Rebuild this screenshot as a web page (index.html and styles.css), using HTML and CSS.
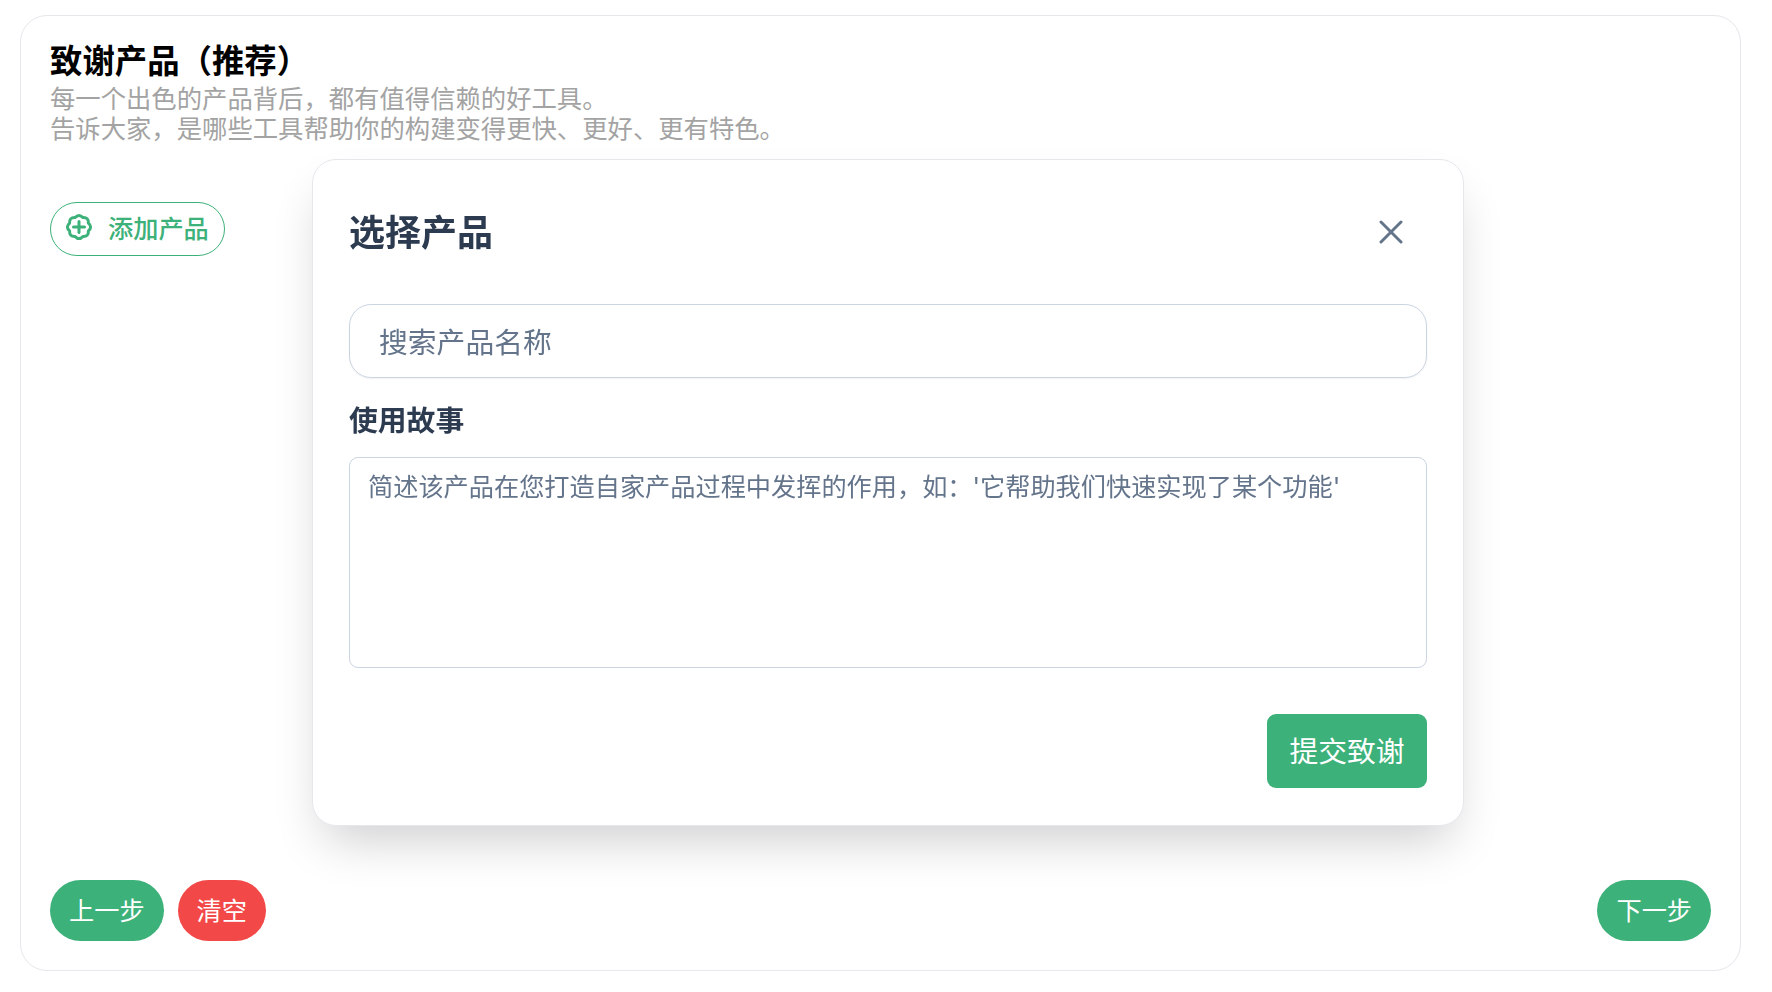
FILE: index.html
```html
<!DOCTYPE html>
<html lang="zh-CN">
<head>
  <meta charset="UTF-8" />
  <meta name="viewport" content="width=device-width, initial-scale=1.0" />
  <title>致谢产品</title>
  <link rel="stylesheet" href="styles.css">
</head>
<body>
  <main class="panel">
    <header class="panel-head">
      <h1>致谢产品（推荐）</h1>
      <p>每一个出色的产品背后，都有值得信赖的好工具。</p>
      <p>告诉大家，是哪些工具帮助你的构建变得更快、更好、更有特色。</p>
    </header>

    <div class="panel-body">
      <button class="add-btn" type="button">
        <svg class="add-icon" viewBox="0 0 26 26" fill="none" stroke="currentColor" stroke-width="3" stroke-linecap="round" stroke-linejoin="round">
          <path d="M22.42 9.1Q26.8 13 22.42 16.9Q22.76 22.76 16.9 22.42Q13 26.8 9.1 22.42Q3.24 22.76 3.58 16.9Q-.8 13 3.58 9.1Q3.24 3.24 9.1 3.58Q13-.8 16.9 3.58Q22.76 3.24 22.42 9.1Z"></path>
          <path d="M13 7.5v11M7.5 13h11"></path>
        </svg>
        添加产品
      </button>
    </div>

    <footer class="panel-foot">
      <div class="foot-left">
        <button class="pill" type="button">上一步</button>
        <button class="pill danger" type="button">清空</button>
      </div>
      <button class="pill" type="button">下一步</button>
    </footer>
  </main>

  <div class="overlay">
    <section class="modal">
      <div class="modal-head">
        <h2>选择产品</h2>
        <button class="close-btn" type="button">
          <svg viewBox="0 0 24 24" fill="none" stroke="currentColor" stroke-width="1.8" stroke-linecap="round">
            <path d="M6 6l12 12M18 6L6 18"></path>
          </svg>
        </button>
      </div>
      <input class="search" type="text" placeholder="搜索产品名称">
      <label class="story-label" for="story">使用故事</label>
      <textarea class="story" id="story" placeholder="简述该产品在您打造自家产品过程中发挥的作用，如：'它帮助我们快速实现了某个功能'"></textarea>
      <div class="modal-actions">
        <button class="submit" type="button">提交致谢</button>
      </div>
    </section>
  </div>
</body>
</html>
```

FILE: styles.css
```css
:root {
  --green: #3cb179;
  --red: #f24848;
  --slate: #2d3b50;
  --muted: #64748b;
  --line: #cbd5e1;
}
* { box-sizing: border-box; margin: 0; padding: 0; }
html, body { height: 100%; }
body {
  font-family: Inter, "Noto Sans CJK SC", sans-serif;
  background: #fff;
  padding: 15px 31px 21px 20px;
}
button, input, textarea { font-family: inherit; }
button { cursor: pointer; border: none; }

.panel {
  height: 956px;
  display: flex;
  flex-direction: column;
  padding: 27px 29px 29px 29px;
  background: #fff;
  border: 1px solid #e5e7eb;
  border-radius: 27px;
}
.panel-head h1 { font-size: 32.4px; line-height: 38px; margin-bottom: 3px; font-weight: 700; color: #000; }
.panel-head p { font-size: 25.35px; line-height: 30px; color: #a3a3a3; }
.panel-body { flex: 1; padding-top: 58px; }
.panel-foot { display: flex; justify-content: space-between; }
.foot-left { display: flex; gap: 14px; }

.add-btn {
  display: inline-flex;
  align-items: center;
  gap: 16px;
  height: 54px;
  padding: 0 15px 4px 15px;
  font-size: 25.2px;
  font-weight: 500;
  color: var(--green);
  background: #fff;
  border: 1px solid var(--green);
  border-radius: 27px;
}
.add-icon { width: 26px; height: 26px; overflow: visible; }

.pill {
  height: 61px;
  padding: 0 19px 4px;
  font-size: 25.2px;
  color: #fff;
  background: var(--green);
  border-radius: 31px;
}
.pill.danger { background: var(--red); }

.overlay {
  position: fixed;
  top: 0;
  left: 0;
  width: 100%;
  height: 100%;
  display: flex;
  align-items: flex-start;
  justify-content: center;
  padding: 159px 0 0 4px;
}
.modal {
  width: 1152px;
  height: 667px;
  padding: 36px;
  background: #fff;
  border: 1px solid #e5e7eb;
  border-radius: 24px;
  box-shadow: 0 25px 50px -12px rgba(0,0,0,0.2);
}
.modal-head {
  display: flex;
  align-items: center;
  justify-content: space-between;
  height: 67px;
  margin-bottom: 41px;
}
.modal-head h2 { font-size: 36px; font-weight: 700; color: var(--slate); }
.close-btn { width: 40px; height: 40px; margin: 4px 16px 0 0; color: var(--muted); background: none; }
.close-btn svg { width: 40px; height: 40px; display: block; }

.search {
  display: block;
  width: 100%;
  height: 74px;
  padding: 2px 29px 0;
  font-size: 28.8px;
  color: var(--slate);
  border: 1.5px solid var(--line);
  border-radius: 22px;
  box-shadow: 0 1px 2px rgba(0,0,0,0.05);
  outline: none;
}
.search::placeholder, .story::placeholder { color: var(--muted); opacity: 1; }
.story-label {
  display: block;
  margin: 23px 0 16px;
  font-size: 28.8px;
  line-height: 40px;
  font-weight: 700;
  color: var(--slate);
}
.story {
  display: block;
  width: 100%;
  height: 211px;
  padding: 11px 18px;
  font-size: 25.2px;
  line-height: 36px;
  color: var(--slate);
  border: 1.5px solid var(--line);
  border-radius: 9px;
  resize: none;
  outline: none;
}
.modal-actions { display: flex; justify-content: flex-end; margin-top: 46px; }
.submit {
  width: 160px;
  height: 74px;
  padding-bottom: 3px;
  font-size: 28.8px;
  color: #fff;
  background: var(--green);
  border-radius: 9px;
}
```
